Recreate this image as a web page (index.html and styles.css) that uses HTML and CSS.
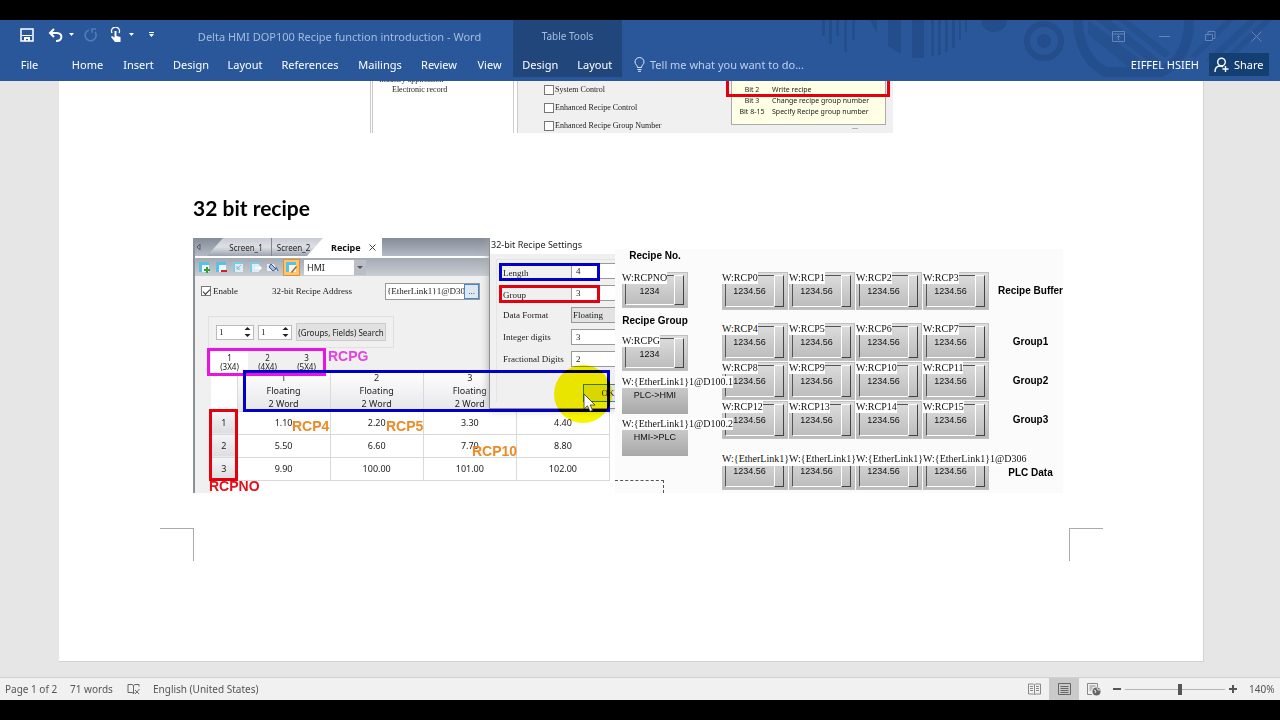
FILE: index.html
```html
<!DOCTYPE html>
<html lang="en">
<head>
<meta charset="utf-8">
<title>Delta HMI DOP100 Recipe function introduction - Word</title>
<link rel="stylesheet" href="styles.css">
</head>
<body>
<header class="ribbon">
  <svg class="ribbon-art" width="460" height="61" viewBox="0 0 460 61" aria-hidden="true">
    <g fill="#234e8b">
      <path d="M2 0h3v16H2zM9 0h3v24H9zM16 0h3v16h-3zM24 0h3v32h-3zM32 0h3v20h-3zM50 0h7v14zM68 0h13v34l-13-8zM92 0h12v38H92zM111 0h3v36h-3zM118 0h3v35h-3zM125 0h3v32h-3zM132 0h3v28h-3zM139 0h2v20h-2zM145 0h2v12h-2z"/>
      <path d="M161 0h26a13 12 0 0 1-26 0z"/>
      <circle cx="224" cy="21" r="7"/>
      <path d="M268 0l66 50h-22L268 14zM290 0l52 42-7 5L276 0zM308 0l42 33-5 5L298 0zM385 40l44-40h9l-45 42zM400 42l44-42h8l-44 42zM370 36l36-36h8l-38 38z" opacity=".7"/>
    </g>
    <g fill="none" stroke="#234e8b">
      <circle cx="224" cy="21" r="17" stroke-width="6"/>
      <path d="M258 0c0 26 12 45 28 52h56c18-10 27-28 27-52" stroke-width="10" opacity=".8"/>
    </g>
  </svg>
  <div class="title-row">
    <div class="quick-access">
      <button class="qa qa-save" aria-label="Save"><svg width="14" height="14" viewBox="0 0 14 14"><path d="M1 1h12v12H1z" fill="none" stroke="#fff" stroke-width="1.5"/><path d="M2 7h10v1H2zM4 9h6v4H8v-2H6v2H4z" fill="#fff"/></svg></button>
      <button class="qa" aria-label="Undo"><svg width="15" height="14" viewBox="0 0 15 14"><path d="M6 1L2 5l4 4M2 5h7c6 0 6 8-1 8" fill="none" stroke="#fff" stroke-width="2"/></svg></button>
      <button class="qa qa-arrow" aria-label="Undo options"><svg width="5" height="3" viewBox="0 0 5 3"><path d="M0 0h5L2.500 3z" fill="#fff"/></svg></button>
      <button class="qa qa-redo" aria-label="Repeat"><svg width="14" height="14" viewBox="0 0 14 14"><path d="M5 2a5.500 5.500 0 1 0 6 2M8 5V1h4" fill="none" stroke="#5279b3" stroke-width="1.700"/></svg></button>
      <button class="qa" aria-label="Touch mode"><svg width="13" height="16" viewBox="0 0 13 16"><path d="M2 6a4 4 0 1 1 7 0" fill="none" stroke="#fff" stroke-width="1.300"/><path d="M4.500 4h2v5l4 1v5H5L1 10l1-1 2.500 1.500z" fill="#fff"/></svg></button>
      <button class="qa qa-arrow" aria-label="Touch mode options"><svg width="5" height="3" viewBox="0 0 5 3"><path d="M0 0h5L2.500 3z" fill="#fff"/></svg></button>
      <button class="qa qa-more" aria-label="Customize"><svg width="5" height="6" viewBox="0 0 5 6"><path d="M0 0h5v1H0zM0 2h5L2.500 5z" fill="#fff"/></svg></button>
    </div>
    <h1 class="doc-title">Delta HMI DOP100 Recipe function introduction - Word</h1>
    <div class="context-title">Table Tools</div>
    <div class="window-buttons">
      <button aria-label="Ribbon display options"><svg width="13" height="11" viewBox="0 0 13 11"><path d="M.5.5h12v10H.5zM.5 3h12M6.500 9V5M4.500 6.500l2-2 2 2"/></svg></button>
      <button aria-label="Minimize"><svg width="11" height="11" viewBox="0 0 11 11"><path d="M0 5.500h11"/></svg></button>
      <button aria-label="Restore"><svg width="11" height="11" viewBox="0 0 11 11"><path d="M.5 3.500h7v6h-7zM3 3V.5h7v7H8"/></svg></button>
      <button aria-label="Close"><svg width="11" height="11" viewBox="0 0 11 11"><path d="M.5.5l10 10M10.500.5l-10 10"/></svg></button>
    </div>
  </div>
  <nav class="tab-row">
    <button class="tab file">File</button>
    <button class="tab short">Home</button>
    <button class="tab short">Insert</button>
    <button class="tab">Design</button>
    <button class="tab">Layout</button>
    <button class="tab long">References</button>
    <button class="tab wide">Mailings</button>
    <button class="tab">Review</button>
    <button class="tab view">View</button>
    <div class="context-tabs"><button class="tab">Design</button><button class="tab">Layout</button></div>
    <button class="tell-me"><svg width="11" height="15" viewBox="0 0 11 15"><path d="M3.500 10.500C3.500 8 1 7.500 1 5a4.500 4.500 0 0 1 9 0c0 2.500-2.500 3-2.500 5.500zM3.500 12.500h4M4 14.300h3" fill="none" stroke="#dbe7f7"/></svg>Tell me what you want to do...</button>
    <span class="user">EIFFEL HSIEH</span>
    <button class="share"><svg width="15" height="16" viewBox="0 0 15 16"><path d="M1 15c0-4 2-6 5-6 1 0 2 0 3 1M11.500 9v6M8.500 12h6" fill="none" stroke="#fff" stroke-width="1.400"/><circle cx="7.500" cy="5" r="3.800" fill="none" stroke="#fff" stroke-width="1.400"/></svg>Share</button>
  </nav>
</header>

<main class="workspace">
  <article class="page">
    <section class="figure-top">
      <div class="tree"><div>Industry application</div><div class="leaf">Electronic record</div></div>
      <div class="options">
        <div class="checks">
          <label><input type="checkbox" class="box">System Control</label>
          <label><input type="checkbox" class="box">Enhanced Recipe Control</label>
          <label><input type="checkbox" class="box">Enhanced Recipe Group Number</label>
        </div>
        <div class="bits-area">
          <div class="bits">
            <table>
              <tr><td>Bit 2</td><td>Write recipe</td></tr>
              <tr><td>Bit 3</td><td>Change recipe group number</td></tr>
              <tr><td>Bit 8-15</td><td>Specify Recipe group number</td></tr>
            </table>
            <div class="mark bits-mark"></div>
          </div>
          <div class="dots">...</div>
        </div>
      </div>
    </section>

    <h2>32 bit recipe</h2>

    <section class="figure-main">
      <div class="editor">
        <div class="doc-tabs">
          <button class="back" aria-label="Scroll left"><svg width="5" height="8" viewBox="0 0 5 8"><path d="M4 1v6L1 4z" fill="none" stroke="#555c66"/></svg></button>
          <button class="doc-tab">Screen_1</button>
          <button class="doc-tab second">Screen_2</button>
          <button class="doc-tab current">Recipe <svg width="7" height="7" viewBox="0 0 7 7"><path d="M.5.5l6 6M6.500.5l-6 6" stroke="#444" fill="none"/></svg></button>
        </div>
        <div class="toolbar">
          <button aria-label="Add recipe"><svg width="13" height="13" viewBox="0 0 13 13"><path d="M1 1h10v3H4v7H1z" fill="#58c1e4"/><path d="M4 4h7v7H4z" fill="#e9f6fb"/><path d="M8 6h2v2h2v2h-2v2H8v-2H6V8h2z" fill="#2f9e3b"/></svg></button>
          <button aria-label="Remove recipe"><svg width="13" height="13" viewBox="0 0 13 13"><path d="M1 1h10v3H4v7H1z" fill="#58c1e4"/><path d="M4 4h7v7H4z" fill="#e9f6fb"/><path d="M6 9h6v2H6z" fill="#d11f2a"/></svg></button>
          <button aria-label="Import"><svg width="13" height="13" viewBox="0 0 13 13"><path d="M1 1h10v2H3v8H1z" fill="#7fcbe4"/><path d="M3 3h8v8H3z" fill="#dceef5"/><path d="M9 4L5 8M5 5v3h3" stroke="#8fb4c6" fill="none"/></svg></button>
          <button aria-label="Export"><svg width="13" height="13" viewBox="0 0 13 13"><path d="M1 1h9v2H3v8H1z" fill="#7fcbe4"/><path d="M3 3h7v8H3z" fill="#dceef5"/><path d="M6 7h6M10 5l2 2-2 2" stroke="#fff" fill="none" stroke-width="1.500"/></svg></button>
          <button aria-label="Fill"><svg width="13" height="13" viewBox="0 0 13 13"><path d="M1 3h7l3 7H1z" fill="#e7edf5"/><path d="M5 3l5 5-3 2-4-4zM10 6l2 4" stroke="#3c5c8e" fill="#a9bddb"/></svg></button>
          <button class="pressed" aria-label="Edit recipe"><svg width="13" height="13" viewBox="0 0 13 13"><path d="M1 1h10v3H4v7H1z" fill="#58c1e4"/><path d="M4 4h7v7H4z" fill="#fff3dc"/><path d="M6 11l5-6 1 1-5 6z" fill="#7d674c"/></svg></button>
          <select class="target" aria-label="Target"><option>HMI</option></select><span class="target-arrow"></span>
        </div>
        <div class="enable-row">
          <label><input type="checkbox" class="box" checked>Enable</label>
          <label class="addr-label" for="addr">32-bit Recipe Address</label>
          <div class="addr"><input id="addr" type="text" value="{EtherLink1}1@D300"><button aria-label="Browse">...</button></div>
        </div>
        <div class="search-group">
          <span class="spin"><input type="text" value="1" aria-label="Group"><svg width="7" height="12" viewBox="0 0 7 12"><path d="M3.500 1l3 3h-6zM3.500 11l3-3h-6z"/></svg></span>
          <span class="spin narrow"><input type="text" value="1" aria-label="Field"><svg width="7" height="12" viewBox="0 0 7 12"><path d="M3.500 1l3 3h-6zM3.500 11l3-3h-6z"/></svg></span>
          <button>(Groups, Fields) Search</button>
        </div>
        <div class="group-tabs"><button class="on">1<br>(3X4)</button><button>2<br>(4X4)</button><button>3<br>(5X4)</button></div>
        <div class="grid-area">
          <table class="recipe">
            <thead><tr><th class="corner"></th><th>1<br>Floating<br>2 Word</th><th>2<br>Floating<br>2 Word</th><th>3<br>Floating<br>2 Word</th><th></th></tr></thead>
            <tbody>
              <tr><th>1</th><td>1.10</td><td>2.20</td><td>3.30</td><td>4.40</td></tr>
              <tr><th>2</th><td>5.50</td><td>6.60</td><td>7.70</td><td>8.80</td></tr>
              <tr><th>3</th><td>9.90</td><td>100.00</td><td>101.00</td><td>102.00</td></tr>
            </tbody>
          </table>
        </div>

        <div class="dialog">
          <div class="dialog-title">32-bit Recipe Settings</div>
          <div class="dialog-body">
            <div class="field low"><label for="len">Length</label><input id="len" type="text" value="4"></div>
            <div class="field low"><label for="grp">Group</label><input id="grp" type="text" value="3"></div>
            <div class="field"><label for="fmt">Data Format</label><select id="fmt"><option>Floating</option></select></div>
            <div class="field"><label for="int">Integer digits</label><input id="int" type="text" value="3"></div>
            <div class="field"><label for="frac">Fractional Digits</label><input id="frac" type="text" value="2"></div>
            <button class="ok">OK</button>
          </div>
          <div class="mark length-mark"></div>
          <div class="mark group-mark"></div>
        </div>
      </div>

      <div class="hmi">
        <div class="controls">
          <div class="caption">Recipe No.</div>
          <div class="pad"><span class="tag">W:RCPNO</span><span class="num">1234</span></div>
          <div class="caption second">Recipe Group</div>
          <div class="pad"><span class="tag">W:RCPG</span><span class="num">1234</span></div>
          <div class="switch"><span class="tag">W:{EtherLink1}1@D100.1</span><button>PLC-&gt;HMI</button></div>
          <div class="switch"><span class="tag">W:{EtherLink1}1@D100.2</span><button>HMI-&gt;PLC</button></div>
          <div class="selection"></div>
        </div>
        <div class="registers">
          <div class="pads">
            <div class="pad"><span class="tag">W:RCP0</span><span class="num">1234.56</span></div>
            <div class="pad"><span class="tag">W:RCP1</span><span class="num">1234.56</span></div>
            <div class="pad"><span class="tag">W:RCP2</span><span class="num">1234.56</span></div>
            <div class="pad"><span class="tag">W:RCP3</span><span class="num">1234.56</span></div>
            <div class="caption">Recipe Buffer</div>
          </div>
          <div class="pads apart">
            <div class="pad"><span class="tag">W:RCP4</span><span class="num">1234.56</span></div>
            <div class="pad"><span class="tag">W:RCP5</span><span class="num">1234.56</span></div>
            <div class="pad"><span class="tag">W:RCP6</span><span class="num">1234.56</span></div>
            <div class="pad"><span class="tag">W:RCP7</span><span class="num">1234.56</span></div>
            <div class="caption">Group1</div>
          </div>
          <div class="pads">
            <div class="pad"><span class="tag">W:RCP8</span><span class="num">1234.56</span></div>
            <div class="pad"><span class="tag">W:RCP9</span><span class="num">1234.56</span></div>
            <div class="pad"><span class="tag">W:RCP10</span><span class="num">1234.56</span></div>
            <div class="pad"><span class="tag">W:RCP11</span><span class="num">1234.56</span></div>
            <div class="caption">Group2</div>
          </div>
          <div class="pads">
            <div class="pad"><span class="tag">W:RCP12</span><span class="num">1234.56</span></div>
            <div class="pad"><span class="tag">W:RCP13</span><span class="num">1234.56</span></div>
            <div class="pad"><span class="tag">W:RCP14</span><span class="num">1234.56</span></div>
            <div class="pad"><span class="tag">W:RCP15</span><span class="num">1234.56</span></div>
            <div class="caption">Group3</div>
          </div>
          <div class="pads apart linked">
            <div class="pad"><span class="tag">W:{EtherLink1}</span><span class="num">1234.56</span></div>
            <div class="pad"><span class="tag">W:{EtherLink1}</span><span class="num">1234.56</span></div>
            <div class="pad"><span class="tag">W:{EtherLink1}</span><span class="num">1234.56</span></div>
            <div class="pad"><span class="tag">W:{EtherLink1}1@D306</span><span class="num">1234.56</span></div>
            <div class="caption">PLC Data</div>
          </div>
        </div>
      </div>

      <div class="mark rcpg-mark"></div>
      <div class="mark fields-mark"></div>
      <div class="mark rcpno-mark"></div>
      <span class="note rcpg-note">RCPG</span>
      <span class="note rcpno-note">RCPNO</span>
      <span class="note rcp4-note">RCP4</span>
      <span class="note rcp5-note">RCP5</span>
      <span class="note rcp10-note">RCP10</span>
      <div class="spot"></div>
      <svg class="cursor" width="14" height="20" viewBox="0 0 14 20" aria-hidden="true"><path d="M1 1v15l3.500-3.200L7 18.500l2.600-1.200L7.200 12H12z" fill="#fff" stroke="#333" stroke-width=".8"/></svg>
    </section>

    <div class="crop-marks"><i class="crop left"></i><i class="crop right"></i></div>
  </article>
</main>

<footer class="status">
  <span class="pages">Page 1 of 2</span>
  <span class="words">71 words</span>
  <svg class="proof" width="14" height="12" viewBox="0 0 14 12"><path d="M1 1.500h4l1.500 1v8L5 9.500H1zM6.500 2.500l1.500-1h4v2M6.500 10.500l1-1M8 7l4 4M12.500 6L8 11" fill="none" stroke="#666"/></svg>
  <span class="lang">English (United States)</span>
  <button class="view-btn" aria-label="Read mode"><svg width="13" height="12" viewBox="0 0 13 12"><path d="M.5 1h5l1 1 1-1h5v10h-5l-1 1-1-1h-5zM6.500 2v9M2 3.500h3M2 5.500h3M2 7.500h3M8 3.500h3M8 5.500h3M8 7.500h3" fill="none" stroke="#888"/></svg></button>
  <button class="view-btn active" aria-label="Print layout"><svg width="13" height="12" viewBox="0 0 13 12"><path d="M.5.5h12v11H.5zM2.500 3.500h8M2.500 5.500h8M2.500 7.500h8M2.500 9.500h8" fill="none" stroke="#666"/></svg></button>
  <button class="view-btn" aria-label="Web layout"><svg width="14" height="13" viewBox="0 0 14 13"><path d="M5 11.500H.5V.5h10V4M2.500 3h6M2.500 5h3M2.500 7h2" fill="none" stroke="#888"/><circle cx="9.500" cy="8.500" r="4" fill="#666"/><path d="M7 7l2 1-1 2M10 5l1 2 2 0" stroke="#eee" fill="none"/></svg></button>
  <button class="zoom-btn" aria-label="Zoom out"><svg width="8" height="8" viewBox="0 0 8 8"><path d="M0 3h8v2H0z" fill="#555"/></svg></button>
  <input class="zoom" type="range" min="0" max="100" value="55" aria-label="Zoom">
  <button class="zoom-btn" aria-label="Zoom in"><svg width="8" height="8" viewBox="0 0 8 8"><path d="M0 3h3V0h2v3h3v2H5v3H3V5H0z" fill="#555"/></svg></button>
  <span class="percent">140%</span>
</footer>
</body>
</html>
```

FILE: styles.css
```css
* { box-sizing: border-box; }
body {
  margin: 0;
  min-height: 100vh;
  padding: 20px 0;
  display: flex;
  flex-direction: column;
  background: #000;
  font-family: "Noto Sans", "Open Sans", sans-serif;
  font-size: 11px;
}
button, input, select { font: inherit; color: inherit; margin: 0; padding: 0; border: 0; background: none; border-radius: 0; }
svg { display: block; flex: none; }

/* ribbon */
.ribbon { position: relative; background: #2a579a; color: #fff; padding-bottom: 4px; flex: none; }
.ribbon-art { position: absolute; right: 0; top: 0; }
.title-row, .tab-row { position: relative; display: flex; }
.title-row { height: 32px; align-items: center; }
.quick-access { display: flex; align-items: center; width: 166px; padding-left: 20px; padding-bottom: 3px; }
.qa { height: 20px; display: grid; place-items: center; margin-right: 6px; }
.qa-save { margin-right: 14px; }
.qa-redo { margin: 0 12px 0 4px; }
.qa-arrow { margin-right: 6px; }
.qa-more { margin-left: 9px; }
.doc-title { margin: 0; width: 347px; text-align: center; font-size: 11px; font-weight: 400; color: #a5bddf; white-space: nowrap; }
.context-title { width: 109px; align-self: stretch; display: grid; place-items: center; background: #21467c; color: #a5bddf; font-size: 10px; }
.window-buttons { margin-left: auto; margin-right: 1px; display: flex; }
.window-buttons button { width: 46px; height: 30px; display: grid; place-items: center; }
.window-buttons path { fill: none; stroke: #6485b8; }
.tab-row { height: 25px; align-items: center; }
.tab { width: 54px; height: 25px; text-align: center; }
.tab.file { width: 59px; margin-right: 3px; }
.tab.short { width: 51px; }
.tab.long { width: 76px; }
.tab.wide { width: 64px; }
.tab.view { width: 47px; }
.context-tabs { display: flex; background: #21467c; width: 109px; }
.context-tabs .tab { flex: 1; }
.tell-me { display: flex; align-items: center; gap: 5px; margin-left: 12px; color: #bdd0ec; white-space: nowrap; }
.user { margin-left: auto; white-space: nowrap; }
.share { display: flex; align-items: center; gap: 5px; height: 23px; width: 60px; padding-left: 5px; margin: 0 11px 0 10px; background: #143f73; }

/* document */
.workspace { flex: 1; display: flex; background: #e6e6e6; border-bottom: 1px solid #cfcfcf; }
.page { flex: 1; margin: 0 76px 15px 59px; padding: 0 100px 0 101px; background: #fff; border: solid #d2d2d2; border-width: 0 1px 1px 0; }
.page h2 { margin: 62px 0 17px 33px; font: 700 21px/26px Lato, sans-serif; color: #000; }
.box { appearance: none; width: 10px; height: 10px; border: 1px solid #777; background: #fff; }

.figure-top { height: 52px; margin-left: 209px; width: 524px; overflow: hidden; display: flex; font: 8px/10px "Liberation Serif", serif; color: #222; }
.tree { width: 144px; border-left: 3px double #c9c9c9; border-right: 1px solid #ccc; margin-left: 1px; padding: 0 0 38px 6px; display: flex; flex-direction: column; justify-content: flex-end; }
.leaf { padding-left: 13px; }
.options { flex: 1; display: flex; justify-content: space-between; background: #f0f0f0; border-left: 1px solid #ccc; margin-left: 3px; }
.checks { padding-left: 26px; }
.checks label { display: flex; align-items: center; gap: 1px; height: 18px; }
.bits-area { width: 162px; }
.bits { position: relative; width: 155px; height: 44px; background: #ffffe6; border: 1px solid #aaa; border-top: 0; padding-top: 3px; font: 7px/11px "Noto Sans", sans-serif; }
.bits table { border-collapse: collapse; width: 100%; }
.bits td { padding: 0; white-space: nowrap; }
.bits td:first-child { width: 40px; text-align: center; }
.mark { position: absolute; border: 3px solid #e3000f; }
.bits-mark { left: -6px; top: -20px; width: 164px; height: 36px; }
.dots { padding-left: 121px; line-height: 4px; }

.figure-main { position: relative; display: flex; height: 255px; margin-left: 33px; width: 870px; overflow: hidden; }
.editor { position: relative; width: 422px; flex: none; display: flex; flex-direction: column; background: #f0f0f0; font-size: 9px; color: #222; overflow: hidden; border-left: 2px solid #8c9097; }
.doc-tabs { display: flex; height: 18px; background: linear-gradient(#858c98, #b4bac4); margin-left: -2px; }
.back { width: 14px; padding-left: 3px; }
.doc-tab { width: 64px; padding-left: 14px; background: linear-gradient(#c8ccd3, #dde0e5 50%, #9ba2ae); clip-path: polygon(16px 0, 100% 0, 100% 100%, 0 100%); white-space: nowrap; font-size: 8px; }
.doc-tab.second { width: 54px; padding: 0 14px 0 4px; clip-path: none; border-left: 1px solid #888; }
.doc-tab.current { width: 75px; margin-left: -18px; padding-left: 24px; display: flex; align-items: center; gap: 8px; background: #fff; font-weight: 700; font-size: 9px; color: #111; }
.toolbar { display: flex; align-items: center; height: 20px; margin-left: -2px; padding-left: 3px; border-top: 2px solid #fff; background: linear-gradient(#a4aab4, #c9cdd4); }
.toolbar button { width: 17px; height: 17px; display: grid; place-items: center; }
.toolbar .pressed { background: #ffc56b; border: 1px solid #dd9133; margin: 0 4px 0 2px; }
.target { appearance: none; width: 50px; height: 15px; padding-left: 3px; background: #fff; }
.target-arrow { width: 12px; height: 15px; background: #b9bec7; display: grid; place-items: center; }
.target-arrow::after { content: ""; border: 3px solid transparent; border-top-color: #555; border-bottom: 0; }
.enable-row { display: flex; align-items: center; height: 30px; padding-left: 6px; font-family: "Liberation Serif", serif; }
.enable-row label { display: flex; align-items: center; gap: 2px; width: 71px; }
.enable-row .addr-label { width: 113px; }
.box:checked { display: grid; place-items: center; }
.box:checked::after { content: ""; width: 6px; height: 3px; border: solid #333; border-width: 0 0 1px 1px; rotate: -45deg; }
.addr { display: flex; align-items: center; width: 95px; height: 17px; background: #fff; border: 1px solid #999; }
.addr input { width: 78px; font-size: 9px; overflow: hidden; padding-left: 1px; }
.addr button { width: 15px; height: 15px; background: #dce9f5; border: 1px solid #4787c7; line-height: 8px; }
.search-group { display: flex; align-items: center; width: 186px; height: 32px; margin: 10px 0 2px 13px; padding-left: 7px; border: 1px solid #e0e0e0; }
.spin { display: flex; align-items: center; width: 38px; height: 15px; background: #fff; border: 1px solid #bbb; padding-right: 2px; margin-right: 4px; }
.spin.narrow { width: 34px; }
.spin input { width: 100%; min-width: 0; padding-left: 2px; font: 9px "Liberation Serif", serif; }
.spin path { fill: #222; }
.search-group button { width: 90px; height: 18px; background: #e1e1e1; border: 1px solid #ccc; font-size: 8px; white-space: nowrap; }
.group-tabs { display: flex; height: 21px; margin-left: 16px; }
.group-tabs button { width: 39px; line-height: 9px; font-size: 8px; background: #f0f0f0; padding-top: 3px; }
.group-tabs .on { background: #fff; width: 37px; }
.grid-area { flex: 1; margin-left: 16px; background: #fff; }
.recipe { width: 399px; table-layout: fixed; border-collapse: collapse; }
.recipe th, .recipe td { height: 23px; padding: 0; font-weight: 400; text-align: center; border: solid #d9d9d9; border-width: 0 1px 1px 0; }
.recipe thead th { height: 40px; line-height: 13px; background: linear-gradient(#fff, #e6e6e9); vertical-align: top; }
.recipe thead .corner { width: 26px; background: #fff; }
.recipe tbody th { background: linear-gradient(#f5f5f7, #dddde0); }

.dialog { position: absolute; left: 294px; top: 0; width: 126px; height: 171px; background: #f0f0f0; border: solid #8c8f95; border-width: 0 0 1px 1px; overflow: hidden; box-shadow: 0 0 8px #aaa; }
.dialog-title { height: 16px; line-height: 14px; padding-left: 1px; background: #fff; white-space: nowrap; }
.dialog-body { margin: 5px 0 0 6px; border: solid #e4e4e4; border-width: 1px 0 0 1px; font-family: "Liberation Serif", serif; }
.field { display: flex; align-items: center; height: 22px; padding-left: 6px; }
.field label { width: 68px; white-space: nowrap; }
.field.low label { padding-top: 4px; }
.field input, .field select { flex: 1; min-width: 0; height: 16px; border: solid #999; border-width: 1px 0 1px 1px; background: #fff; padding-left: 4px; appearance: none; }
.field select { background: #e2e2e2; padding-left: 1px; }
.ok { display: block; width: 50px; height: 18px; margin: 14px 0 0 86px; border: 1px solid #3c7fb1; background: #e1e1e1; }
.length-mark { left: 9px; top: 25px; width: 101px; height: 18px; border-color: #0000c8; }
.group-mark { left: 9px; top: 47px; width: 101px; height: 18px; }

/* HMI screen */
.hmi { flex: 1; display: flex; margin-top: 11px; background: #fbfbfb; color: #111; }
.controls { position: relative; z-index: 1; width: 107px; padding-left: 7px; display: flex; flex-direction: column; }
.caption { font: 700 10px/14px "Liberation Sans", sans-serif; text-align: center; white-space: nowrap; color: #000; }
.controls .caption { width: 66px; margin-bottom: 9px; }
.controls .second { margin: 6px 0 7px; }
.tag { position: relative; z-index: 1; display: block; width: max-content; height: 12px; background: #fff; font: 10px/12px "Liberation Serif", serif; white-space: nowrap; }
.pad { position: relative; width: 66px; height: 38px; background: linear-gradient(#dedede, #bababa); border: 1px solid #c0c0c0; }
.pad .tag { margin: -1px 0 0 -1px; }
.controls .pad { height: 36px; }
.pad::before { content: ""; position: absolute; inset: 2px 12px 2px 2px; border: 1px solid; border-color: #555 #fff #fff #555; }
.pad::after { content: ""; position: absolute; inset: 2px 3px 2px auto; width: 8px; border: 1px solid; border-color: #fff #444 #444 #fff; }
.num { position: relative; display: block; width: 53px; font: 9px/14px "Liberation Sans", sans-serif; text-align: center; }
.switch { margin-top: 5px; width: 66px; }
.switch + .switch { margin-top: 4px; }
.switch button { display: block; width: 100%; height: 26px; padding-bottom: 11px; background: linear-gradient(#c8c8c8, #a8a8a8); font: 9px/13px "Liberation Sans", sans-serif; }
.selection { position: absolute; left: 0; bottom: 0; width: 49px; height: 13px; border: dashed #555; border-width: 1px 1px 0 0; }
.registers { flex: 1; display: flex; flex-direction: column; gap: 1px; padding-top: 23px; }
.pads { display: grid; grid-template-columns: repeat(4, 66px) 1fr; column-gap: 1px; }
.pads .caption { align-self: center; padding-left: 8px; }
.apart { margin-top: 12px; }
.linked .caption { align-self: end; padding-bottom: 10px; }
.linked .tag { height: 14px; line-height: 14px; }
.linked .num { line-height: 11px; }

/* annotations laid over the figure */
.rcpg-mark { left: 14px; top: 110px; width: 119px; height: 28px; border-color: #e815e0; }
.fields-mark { left: 50px; top: 132px; width: 367px; height: 42px; border-color: #0000c8; }
.rcpno-mark { left: 16px; top: 171px; width: 29px; height: 72px; }
.note { position: absolute; font: 700 14px/16px "Liberation Sans", sans-serif; color: #ee8a26; }
.rcpg-note { left: 135px; top: 110px; color: #e83fe0; }
.rcpno-note { left: 16px; top: 240px; color: #e3101a; }
.rcp4-note { left: 99px; top: 180px; }
.rcp5-note { left: 193px; top: 180px; }
.rcp10-note { left: 279px; top: 205px; }
.spot { position: absolute; left: 361px; top: 127px; width: 58px; height: 58px; border-radius: 50%; background: #f8f400; mix-blend-mode: multiply; }
.cursor { position: absolute; left: 390px; top: 155px; }

.crop-marks { display: flex; justify-content: space-between; margin-top: 35px; }
.crop { width: 34px; height: 33px; border: 0 solid #aaa; border-top-width: 1px; }
.crop.left { border-right-width: 1px; }
.crop.right { border-left-width: 1px; }

/* status bar */
.status { display: flex; align-items: center; height: 22px; flex: none; background: #f1f1f1; color: #555; font-size: 10px; padding-left: 5px; white-space: nowrap; }
.pages { width: 65px; }
.words { width: 57px; }
.proof { margin-right: 12px; }
.lang { flex: 1; }
.view-btn { width: 30px; height: 22px; display: grid; place-items: center; }
.view-btn.active { background: #cacaca; }
.zoom-btn { width: 16px; height: 16px; display: grid; place-items: center; }
.zoom { appearance: none; width: 100px; height: 12px; background: linear-gradient(#b5b5b5, #b5b5b5) center / 100% 1px no-repeat; }
.zoom::-webkit-slider-thumb { appearance: none; width: 4px; height: 11px; background: #555; }
.percent { width: 39px; padding-left: 8px; }
```
